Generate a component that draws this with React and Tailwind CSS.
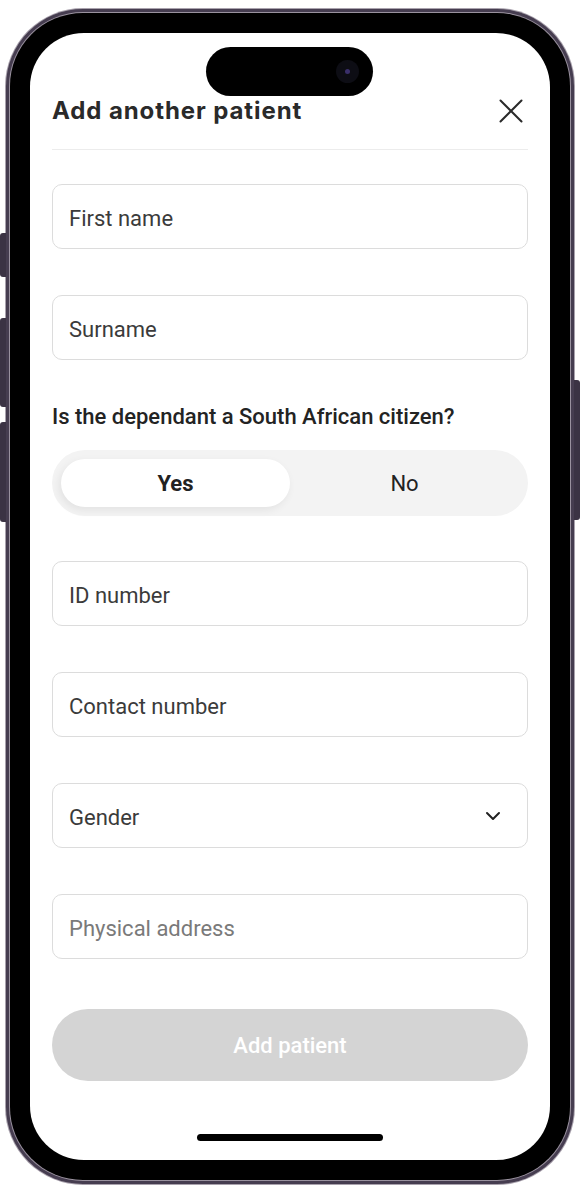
import { ChevronDown } from "lucide-react";

const fields = [
  { label: "First name" },
  { label: "Surname" },
];

const moreFields = [
  { label: "ID number" },
  { label: "Contact number" },
  { label: "Gender", select: true },
  { label: "Physical address", muted: true },
];

const Field = ({ label, select, muted }) => (
  <div className="h-[65px] rounded-[10px] border-[1.5px] border-[#dcdcdc] bg-white flex items-center justify-between pl-[16px] pr-[22px] pt-[3px]">
    <span
      className={`text-[22px] ${muted ? "text-[#7a7a7a]" : "text-[#3b3b3b]"}`}
    >
      {label}
    </span>
    {select && <ChevronDown size={24} strokeWidth={2} className="text-[#222] -mt-[3px]" />}
  </div>
);

const App = () => {
  return (
    <div className="w-[580px] h-[1193px] bg-white pt-[8px] pl-[5px] font-['Roboto',sans-serif]">
      <div className="relative w-[570px] h-[1177px]">
        {/* botones laterales */}
        <div className="absolute -left-[5px] top-[225px] w-[6px] h-[44px] rounded-l-[3px] bg-[#3b3344]" />
        <div className="absolute -left-[5px] top-[310px] w-[6px] h-[89px] rounded-l-[3px] bg-[#3b3344]" />
        <div className="absolute -left-[5px] top-[414px] w-[6px] h-[100px] rounded-l-[3px] bg-[#3b3344]" />
        <div className="absolute -right-[5px] top-[372px] w-[6px] h-[140px] rounded-r-[3px] bg-[#3b3344]" />

        {/* marco */}
        <div className="w-full h-full rounded-[78px] bg-[#a9a2ad] p-[1px]">
          <div className="w-full h-full rounded-[77px] bg-[#463d50] p-[3px]">
            <div className="w-full h-full rounded-[74px] bg-[#9a929f] p-[1px]">
              <div className="w-full h-full rounded-[73px] bg-black p-[20px]">
                {/* pantalla */}
                <div className="relative w-full h-full rounded-[54px] bg-white overflow-hidden px-[22px] pt-[63px]">
                  <div className="absolute left-[176px] top-[14px] w-[167px] h-[49px] rounded-full bg-black">
                    <div className="absolute right-[14px] top-[13px] w-[23px] h-[23px] rounded-full bg-[#0d0d14] flex items-center justify-center">
                      <div className="w-[5px] h-[5px] rounded-full bg-[#3a2f6a]" />
                    </div>
                  </div>

                  {/* cabecera */}
                  <div className="flex items-center justify-between h-[30px]">
                    <h1 className="text-[24px] font-bold text-[#2a2a2a] tracking-[0.9px] font-['Inter',sans-serif]">
                      Add another patient
                    </h1>
                    <svg
                      width="24"
                      height="24"
                      viewBox="0 0 24 24"
                      className="mr-[5px] text-[#2a2a2a]"
                      fill="none"
                      stroke="currentColor"
                      strokeWidth="2"
                      strokeLinecap="round"
                    >
                      <path d="M1.5 1.5 22.5 22.5M22.5 1.5 1.5 22.5" />
                    </svg>
                  </div>
                  <div className="mt-[23px] h-[1px] bg-[#ececec]" />

                  <div className="mt-[34px] flex flex-col gap-[46px]">
                    {fields.map((f) => (
                      <Field key={f.label} {...f} />
                    ))}
                  </div>

                  <p className="mt-[45px] h-[24px] leading-[24px] text-[22px] font-medium text-[#232323] whitespace-nowrap">
                    Is the dependant a South African citizen?
                  </p>

                  <div className="mt-[21px] h-[66px] rounded-full bg-[#f3f3f3] p-[9px] grid grid-cols-2">
                    <div className="rounded-full bg-white shadow-[-2px_3px_8px_rgba(0,0,0,0.07)] flex items-center justify-center text-[22px] font-bold text-[#222]">
                      Yes
                    </div>
                    <div className="flex items-center justify-center text-[22px] text-[#222]">
                      No
                    </div>
                  </div>

                  <div className="mt-[45px] flex flex-col gap-[46px]">
                    {moreFields.map((f) => (
                      <Field key={f.label} {...f} />
                    ))}
                  </div>

                  <button className="mt-[50px] w-full h-[72px] rounded-full bg-[#d4d4d4] text-white text-[22px] font-medium">
                    Add patient
                  </button>

                  <div className="absolute left-[167px] bottom-[19px] w-[186px] h-[7px] rounded-full bg-black" />
                </div>
              </div>
            </div>
          </div>
        </div>
      </div>
    </div>
  );
};

export default App;
